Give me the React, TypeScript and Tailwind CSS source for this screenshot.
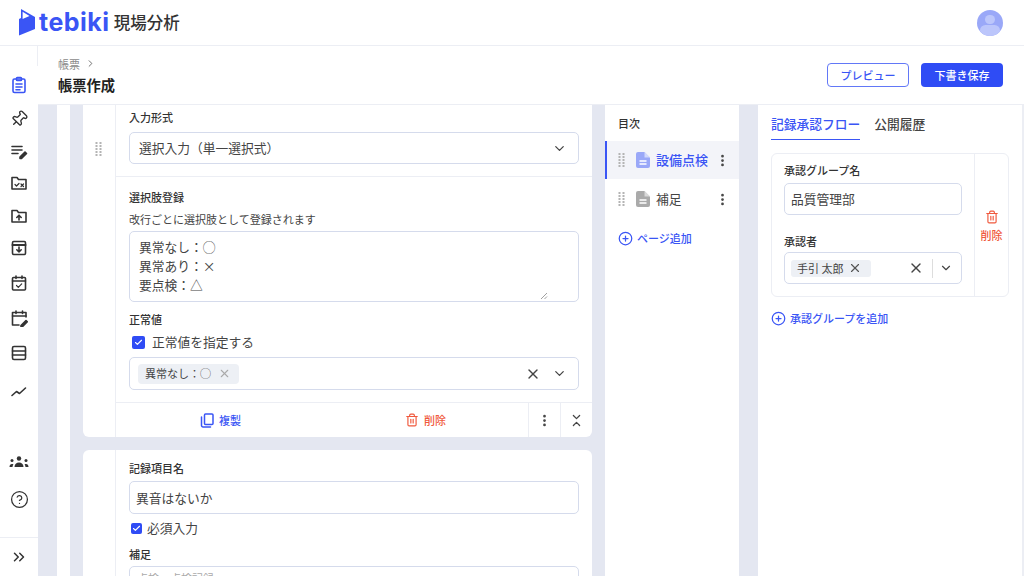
import React from 'react';
import { ChevronDown, ChevronRight, ChevronsRight, ChevronsDownUp, X, Trash2, EllipsisVertical, CirclePlus, CircleHelp, Check, Pin } from 'lucide-react';

const font = { fontFamily: '"Noto Sans CJK JP", "Noto Sans", sans-serif' };

const Grip = () => (
  <svg width="8" height="16" viewBox="0 0 8 16" fill="#b4b4b4">
    {[1, 4, 7, 10, 13].map((y) => (
      <React.Fragment key={y}>
        <rect x="0.5" y={y} width="2" height="2" />
        <rect x="4.5" y={y} width="2" height="2" />
      </React.Fragment>
    ))}
  </svg>
);

const NavSvg = ({ children, active, className }: { children: React.ReactNode; active?: boolean; className?: string }) => (
  <svg className={className} width="18" height="18" viewBox="0 0 18 18" fill="none" stroke={active ? '#3a55f5' : '#333'} strokeWidth="1.6" strokeLinecap="round" strokeLinejoin="round">
    {children}
  </svg>
);

const Logo = () => (
  <svg width="17" height="27" viewBox="0 0 17 27">
    <path d="M2 0 L16 8 V20 L0 26.5 V10 L2 9 Z" fill="#3a55f5" />
    <path d="M3.6 2.8 L10.5 7 L3.6 10 Z" fill="#fff" />
  </svg>
);

const DocIcon = ({ color }: { color: string }) => (
  <svg width="14" height="16" viewBox="0 0 14 16">
    <path d="M2 0h6.5L14 5.5V14a2 2 0 0 1-2 2H2a2 2 0 0 1-2-2V2a2 2 0 0 1 2-2z" fill={color} />
    <path d="M8.5 0v5.5H14" fill="#fff" opacity="0.55" />
    <path d="M3.5 9h7M3.5 12h7" stroke="#fff" strokeWidth="1.4" />
  </svg>
);

const CopyIcon = () => (
  <svg width="14" height="15" viewBox="0 0 14 15" fill="none" stroke="#3a55f5" strokeWidth="1.5" strokeLinejoin="round" strokeLinecap="round">
    <rect x="4.5" y="1" width="8.5" height="10.5" rx="1" />
    <path d="M1.5 4v8.5a1.5 1.5 0 0 0 1.5 1.5h7.5" />
  </svg>
);

const Label = ({ children }: { children: React.ReactNode }) => (
  <div className="text-[11px] leading-4 font-medium text-[#333]">{children}</div>
);

const Tick = ({ size }: { size: string }) => (
  <span className={`${size} flex items-center justify-center rounded-[2px] bg-[#2f4cf5]`}>
    <Check size={9} strokeWidth={3} color="#fff" />
  </span>
);

export default function App() {
  return (
    <div className="w-[1024px] h-[576px] overflow-hidden bg-white flex flex-col text-[#333]" style={font}>
      {/* top bar */}
      <header className="h-[46px] shrink-0 border-b border-[#eceef4] flex items-center justify-between pl-[19px] pr-[21px]">
        <div className="flex items-center">
          <Logo />
          <span className="ml-[3px] text-[25px] leading-none font-bold tracking-[0.5px] text-[#3a55f5]" style={{ fontFamily: 'Inter, sans-serif' }}>tebiki</span>
          <span className="ml-[4px] text-[16.5px] font-medium text-[#333]">現場分析</span>
        </div>
        <div className="w-[26px] h-[26px] rounded-full bg-[#9aa8f8] overflow-hidden flex flex-col items-center">
          <span className="mt-[5px] w-[10px] h-[10px] rounded-full bg-[#bcc6fb]" />
          <span className="mt-[1px] w-[20px] h-[12px] rounded-full bg-[#bcc6fb]" />
        </div>
      </header>

      <div className="flex flex-1 min-h-0">
        {/* side nav */}
        <nav className="w-[38px] shrink-0 flex flex-col items-center">
          <div className="h-[20px] w-full border-r border-[#eceef4]" />
          <div className="flex-1 flex flex-col items-center pt-[10px]">
            <NavSvg active>
              <rect x="3" y="3" width="12" height="13.5" rx="1.5" />
              <rect x="6.5" y="1.5" width="5" height="3" rx="0.8" />
              <path d="M6 8h6M6 11h6M6 13.8h4" />
            </NavSvg>
            <Pin size={18} strokeWidth={1.8} color="#333" className="mt-[16px] rotate-45" />
            <NavSvg className="mt-[14px]">
              <path d="M2 4.5h10M2 8h10M2 11.5h6" />
              <path d="M10 15l5-5 1.5 1.5-5 5h-1.5z" fill="#333" />
            </NavSvg>
            <NavSvg className="mt-[14px]">
              <path d="M2 15V3.5h5l1.5 2H16V15z" />
              <path d="M5 10.5l1.5 1.5 2.5-2.5M11 10l2.5 2.5M13.5 10L11 12.5" strokeWidth="1.2" />
            </NavSvg>
            <NavSvg className="mt-[15px]">
              <path d="M2 15V3.5h5l1.5 2H16V15z" />
              <path d="M9 13V8.5M6.8 10.5L9 8.2l2.2 2.3" />
            </NavSvg>
            <NavSvg className="mt-[14px]">
              <rect x="2.5" y="2.5" width="13" height="13" rx="1.2" />
              <path d="M2.5 6h13" strokeWidth="2" />
              <path d="M9 8v5M6.8 10.8L9 13l2.2-2.2" />
            </NavSvg>
            <NavSvg className="mt-[17px]">
              <rect x="2.5" y="3.5" width="13" height="12.5" rx="1" />
              <path d="M2.5 7h13M6 2v2.5M12 2v2.5" />
              <path d="M6.5 11.5l1.8 1.8 3.4-3.4" strokeWidth="1.2" />
            </NavSvg>
            <NavSvg className="mt-[17px]">
              <path d="M16 8V3.5H2.5V16H9" />
              <path d="M2.5 7h13.5M6 2v2.5M12.5 2v2.5" />
              <path d="M11 16.5l5-5 1.3 1.3-5 5H11z" fill="#333" />
            </NavSvg>
            <NavSvg className="mt-[17px]">
              <rect x="2.5" y="2.5" width="13" height="13" rx="1.5" />
              <path d="M2.5 7h13M2.5 11h13" />
            </NavSvg>
            <NavSvg className="mt-[20px]">
              <path d="M2 13.5l4.5-4 3 2 6-5.5" />
            </NavSvg>
          </div>
          <div className="flex flex-col items-center gap-[22px] mb-[28px]">
            <svg width="20" height="12" viewBox="0 0 20 12" fill="#333">
              <circle cx="10" cy="2.5" r="2.2" />
              <path d="M5.5 11c0-3 2-4.5 4.5-4.5s4.5 1.5 4.5 4.5z" />
              <circle cx="3" cy="4.5" r="1.5" />
              <path d="M0.5 11c0-2 1-3 2.5-3 .5 0 1 .2 1.4.4-.6.8-.9 1.6-.9 2.6z" />
              <circle cx="17" cy="4.5" r="1.5" />
              <path d="M19.5 11c0-2-1-3-2.5-3-.5 0-1 .2-1.4.4.6.8.9 1.6.9 2.6z" />
            </svg>
            <CircleHelp size={19} strokeWidth={1.6} color="#333" />
          </div>
          <div className="w-full h-[39px] border-t border-[#eceef4] flex items-center justify-center">
            <ChevronsRight size={18} strokeWidth={2} color="#333" />
          </div>
        </nav>

        <div className="flex-1 min-w-0 flex flex-col">
          {/* page header */}
          <div className="h-[59px] shrink-0 border-b border-[#eceef4] flex items-center justify-between pl-[20px] pr-[21px]">
            <div>
              <div className="flex items-center gap-[5px] text-[11px] leading-4 text-[#8a8a8a]">
                帳票 <ChevronRight size={11} color="#666" />
              </div>
              <div className="mt-[3px] text-[14.25px] leading-5 font-bold text-[#222]">帳票作成</div>
            </div>
            <div className="flex items-center gap-[12px]">
              <button className="w-[82px] h-[24px] rounded-[4px] border border-[#6278f7] text-[11px] font-medium text-[#3a55f5]">プレビュー</button>
              <button className="w-[82px] h-[24px] rounded-[4px] bg-[#2f4cf5] text-[11px] font-medium text-white">下書き保存</button>
            </div>
          </div>

          <div className="flex-1 min-h-0 flex bg-[#e4e7f1]">
            <div className="w-[19px] shrink-0" />
            <div className="w-[13px] shrink-0 bg-white" />
            {/* form cards */}
            <div className="w-[535px] shrink-0 px-[13px] overflow-hidden">
              <div className="bg-white rounded-b-[6px] flex h-[332px]">
                <div className="w-[33px] shrink-0 border-r border-[#eceef4] pt-[36px] flex justify-center">
                  <Grip />
                </div>
                <div className="flex-1 min-w-0 flex flex-col">
                  <div className="h-[72px] shrink-0 border-b border-[#eceef4] px-[13px] pt-[4px]">
                    <Label>入力形式</Label>
                    <div className="mt-[7px] h-[32px] rounded-[5px] border border-[#d5dbec] flex items-center justify-between pl-[9px] pr-[11px] text-[12.75px] text-[#444]">
                      選択入力（単一選択式）
                      <ChevronDown size={15} color="#444" />
                    </div>
                  </div>
                  <div className="flex-1 px-[13px] pt-[12px]">
                    <Label>選択肢登録</Label>
                    <div className="mt-[6px] text-[11px] leading-4 text-[#444]">改行ごとに選択肢として登録されます</div>
                    <div className="relative mt-[4px] h-[71px] rounded-[5px] border border-[#d5dbec] pl-[9px] pt-[5px] text-[12.75px] leading-[19px] text-[#444]">
                      <div>異常なし：◯</div>
                      <div>異常あり：×</div>
                      <div>要点検：△</div>
                      <svg className="absolute right-[30px] bottom-[1px]" width="8" height="8" viewBox="0 0 8 8" stroke="#888" strokeWidth="0.8">
                        <path d="M1 7l6-6M4.5 7L7 4.5" />
                      </svg>
                    </div>
                    <div className="mt-[9px]"><Label>正常値</Label></div>
                    <div className="mt-[6px] flex items-center gap-[7px] pl-[3px] text-[12.75px] leading-[18px] text-[#444]">
                      <Tick size="w-[13px] h-[13px]" />
                      正常値を指定する
                    </div>
                    <div className="mt-[6px] h-[33px] rounded-[5px] border border-[#d5dbec] flex items-center justify-between pl-[8px] pr-[11px]">
                      <span className="h-[20px] rounded-[4px] bg-[#edf0f5] pl-[7px] pr-[8px] flex items-center gap-[7px] text-[11px] text-[#444]">
                        異常なし：◯
                        <X size={13} color="#aaa" />
                      </span>
                      <span className="flex items-center gap-[11px]">
                        <X size={16} color="#444" />
                        <ChevronDown size={15} color="#444" />
                      </span>
                    </div>
                  </div>
                  <div className="h-[35px] shrink-0 border-t border-[#eceef4] flex">
                    <button className="w-[224px] flex items-center justify-start pl-[84px] gap-[5px] text-[11px] font-medium text-[#3a55f5]">
                      <CopyIcon /> 複製
                    </button>
                    <button className="w-[188px] flex items-center justify-start pl-[65px] gap-[5px] text-[11px] font-medium text-[#f0583c]">
                      <Trash2 size={14} /> 削除
                    </button>
                    <div className="w-[32px] border-l border-[#eceef4] flex items-center justify-center">
                      <EllipsisVertical size={15} strokeWidth={2.4} color="#444" />
                    </div>
                    <div className="flex-1 border-l border-[#eceef4] flex items-center justify-center">
                      <ChevronsDownUp size={15} strokeWidth={2} color="#444" />
                    </div>
                  </div>
                </div>
              </div>

              <div className="mt-[13px] bg-white rounded-t-[6px] flex h-[200px]">
                <div className="w-[33px] shrink-0 border-r border-[#eceef4]" />
                <div className="flex-1 min-w-0 px-[13px] pt-[10px]">
                  <Label>記録項目名</Label>
                  <div className="mt-[5px] h-[33px] rounded-[5px] border border-[#d5dbec] flex items-center pl-[6px] text-[12.75px] text-[#444]">異音はないか</div>
                  <div className="mt-[5px] flex items-center gap-[5px] pl-[2px] text-[12.75px] leading-[18px] text-[#444]">
                    <Tick size="w-[11px] h-[11px]" />
                    必須入力
                  </div>
                  <div className="mt-[9px]"><Label>補足</Label></div>
                  <div className="mt-[4px] h-[33px] rounded-[5px] border border-[#d5dbec] pl-[7px] pt-[3px] text-[11px] leading-4 text-[#aaa]">点検・点検記録</div>
                </div>
              </div>
            </div>

            {/* table of contents */}
            <div className="w-[134px] shrink-0 bg-white flex flex-col">
              <div className="h-[36px] pl-[13px] pt-[10px] text-[11px] leading-4 font-medium text-[#333]">目次</div>
              <div className="h-[38px] bg-[#f3f4f9] border-l-2 border-[#3a55f5] pl-[11px] pr-[9px] flex items-center text-[#3a55f5]">
                <Grip />
                <span className="ml-[10px] flex"><DocIcon color="#9aa8f8" /></span>
                <span className="ml-[6px] text-[13px] font-medium">設備点検</span>
                <EllipsisVertical size={15} strokeWidth={2.4} color="#444" className="ml-auto" />
              </div>
              <div className="mt-[1px] h-[38px] pl-[13px] pr-[9px] flex items-center text-[#444]">
                <Grip />
                <span className="ml-[10px] flex"><DocIcon color="#aaa" /></span>
                <span className="ml-[6px] text-[12.75px]">補足</span>
                <EllipsisVertical size={15} strokeWidth={2.4} color="#444" className="ml-auto" />
              </div>
              <div className="mt-[12px] pl-[13px] flex items-center gap-[4px] text-[11px] font-medium text-[#3a55f5]">
                <CirclePlus size={15} /> ページ追加
              </div>
            </div>

            <div className="w-[19px] shrink-0" />

            {/* right panel */}
            <div className="flex-1 min-w-0 bg-white pl-[13px] pr-[13px] border-r-[2px] border-[#eceef4]">
              <div className="h-[35px] flex gap-[14px] text-[12.75px] font-medium">
                <div className="h-[35px] pt-[11px] border-b-[1.5px] border-[#3a55f5] text-[#3a55f5] leading-[16px]">記録承認フロー</div>
                <div className="pt-[11px] leading-[16px] text-[#444]">公開履歴</div>
              </div>
              <div className="mt-[13px] h-[144px] rounded-[6px] border border-[#eceef4] flex">
                <div className="flex-1 px-[12px] pt-[8px]">
                  <Label>承認グループ名</Label>
                  <div className="mt-[5px] h-[32px] rounded-[5px] border border-[#d5dbec] flex items-center pl-[6px] text-[12.75px] text-[#444]">品質管理部</div>
                  <div className="mt-[18px]"><Label>承認者</Label></div>
                  <div className="mt-[3px] h-[32px] rounded-[5px] border border-[#d5dbec] flex items-center pl-[6px] pr-[8px]">
                    <span className="h-[17px] rounded-[3px] bg-[#edf0f5] pl-[6px] pr-[9px] flex items-center gap-[5px] text-[11px] text-[#444]">
                      手引 太郎 <X size={14} color="#555" />
                    </span>
                    <X size={16} color="#444" className="ml-auto" />
                    <span className="ml-[8px] h-[19px] border-l border-[#ddd]" />
                    <ChevronDown size={14} color="#444" className="ml-[6px]" />
                  </div>
                </div>
                <div className="w-[34px] pt-[4px] border-l border-[#eceef4] flex flex-col items-center justify-center text-[11px] font-medium text-[#f0583c]">
                  <Trash2 size={14} />
                  <span className="mt-[3px]">削除</span>
                </div>
              </div>
              <div className="mt-[13px] flex items-center gap-[4px] text-[11px] font-medium text-[#3a55f5]">
                <CirclePlus size={15} /> 承認グループを追加
              </div>
            </div>
          </div>
        </div>
      </div>
    </div>
  );
}
